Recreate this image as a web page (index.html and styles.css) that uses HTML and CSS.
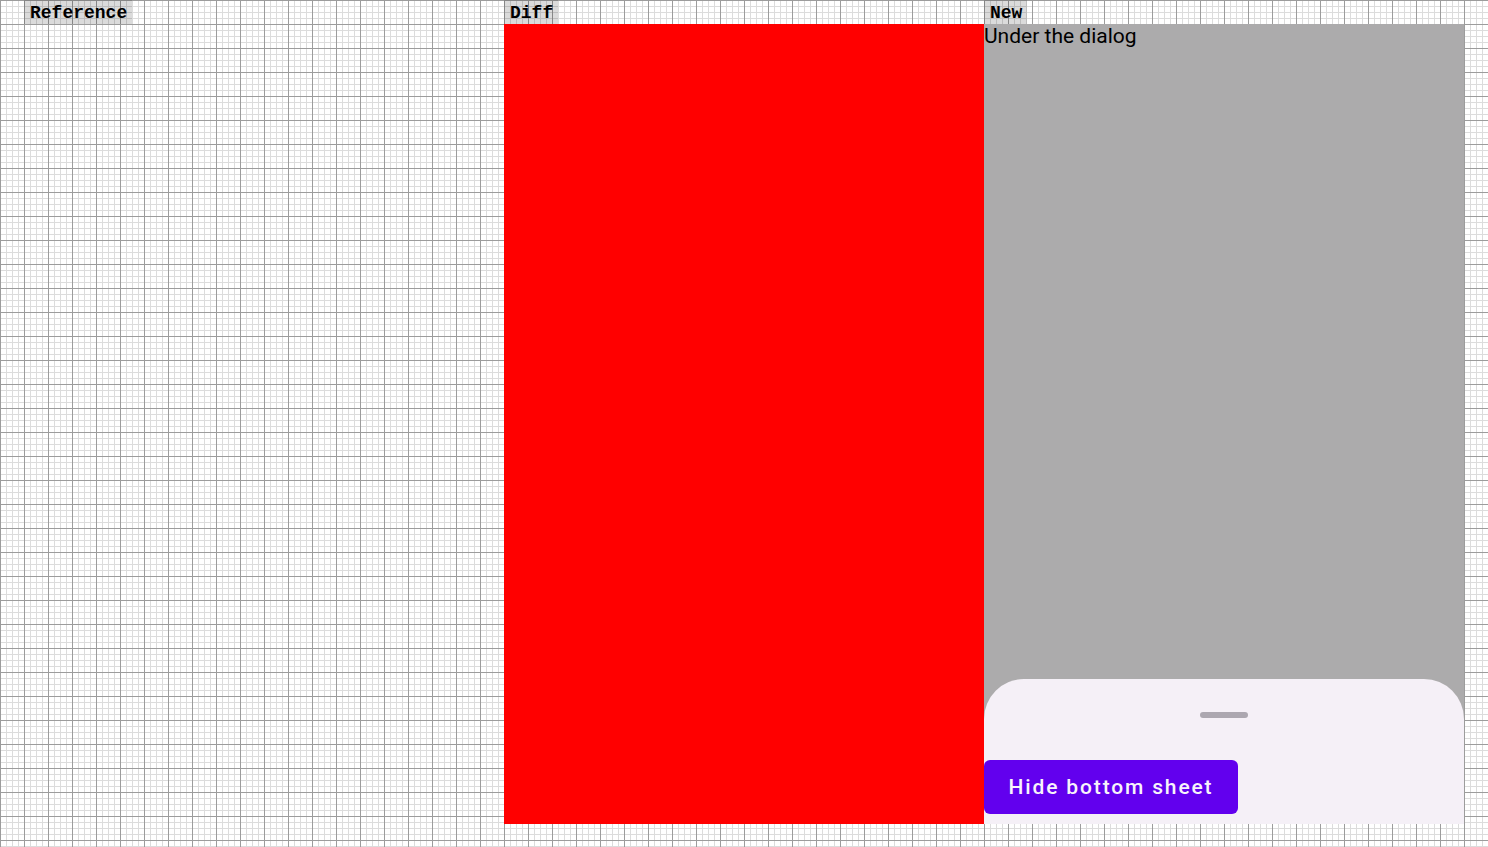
FILE: index.html
```html
<!DOCTYPE html>
<html>
<head>
<meta charset="utf-8">
<link rel="stylesheet" href="styles.css">
</head>
<body>
<div class="columns">
  <div class="column">
    <div class="label">Reference</div>
    <div class="panel panel-empty"></div>
  </div>
  <div class="column">
    <div class="label">Diff</div>
    <div class="panel panel-diff"></div>
  </div>
  <div class="column">
    <div class="label">New</div>
    <div class="panel panel-new">
      <div class="under-text">Under the dialog</div>
      <div class="sheet">
        <div class="handle"></div>
        <button class="sheet-button">Hide bottom sheet</button>
      </div>
    </div>
  </div>
</div>
</body>
</html>
```

FILE: styles.css
```css
html, body {
  margin: 0;
  padding: 0;
}

body {
  width: 1488px;
  height: 847px;
  overflow: hidden;
  background-color: #ffffff;
  background-image:
    linear-gradient(to right, #9c9c9c 1px, transparent 1px),
    linear-gradient(to bottom, #9c9c9c 1px, transparent 1px),
    linear-gradient(to right, #dcdcdc 1px, transparent 1px),
    linear-gradient(to bottom, #dcdcdc 1px, transparent 1px);
  background-size: 24px 24px, 24px 24px, 6px 6px, 6px 6px;
}

.columns {
  display: flex;
  padding-left: 24px;
}

.column {
  width: 480px;
  display: flex;
  flex-direction: column;
  align-items: flex-start;
}

.label {
  height: 24px;
  line-height: 26px;
  padding: 0 5px 0 6px;
  background: rgba(0, 0, 0, 0.14);
  font-family: "Nimbus Mono PS", "Courier New", "FreeMono", "Liberation Mono", monospace;
  font-weight: 700;
  font-size: 18px;
  color: #000;
}

.panel {
  width: 480px;
  height: 800px;
}

.panel-empty {
  background: transparent;
}

.panel-diff {
  background: #ff0000;
}

.panel-new {
  background: #acabac;
  display: flex;
  flex-direction: column;
  overflow: hidden;
}

.under-text {
  font-family: Roboto, "Noto Sans", sans-serif;
  font-size: 21px;
  line-height: 24px;
  color: #000;
}

.sheet {
  margin-top: auto;
  height: 145px;
  background: #f5f0f7;
  border-radius: 40px 40px 0 0;
  display: flex;
  flex-direction: column;
  align-items: center;
}

.handle {
  margin-top: 33px;
  width: 48px;
  height: 6px;
  border-radius: 3px;
  background: #aca7b0;
}

.sheet-button {
  margin-top: 42px;
  align-self: flex-start;
  height: 54px;
  width: 254px;
  padding: 0;
  border: none;
  border-radius: 6px;
  background: #6200ee;
  color: #f8f4fb;
  font-family: Roboto, "Noto Sans", sans-serif;
  font-weight: 500;
  font-size: 21px;
  letter-spacing: 1.85px;
  text-align: center;
}
```
